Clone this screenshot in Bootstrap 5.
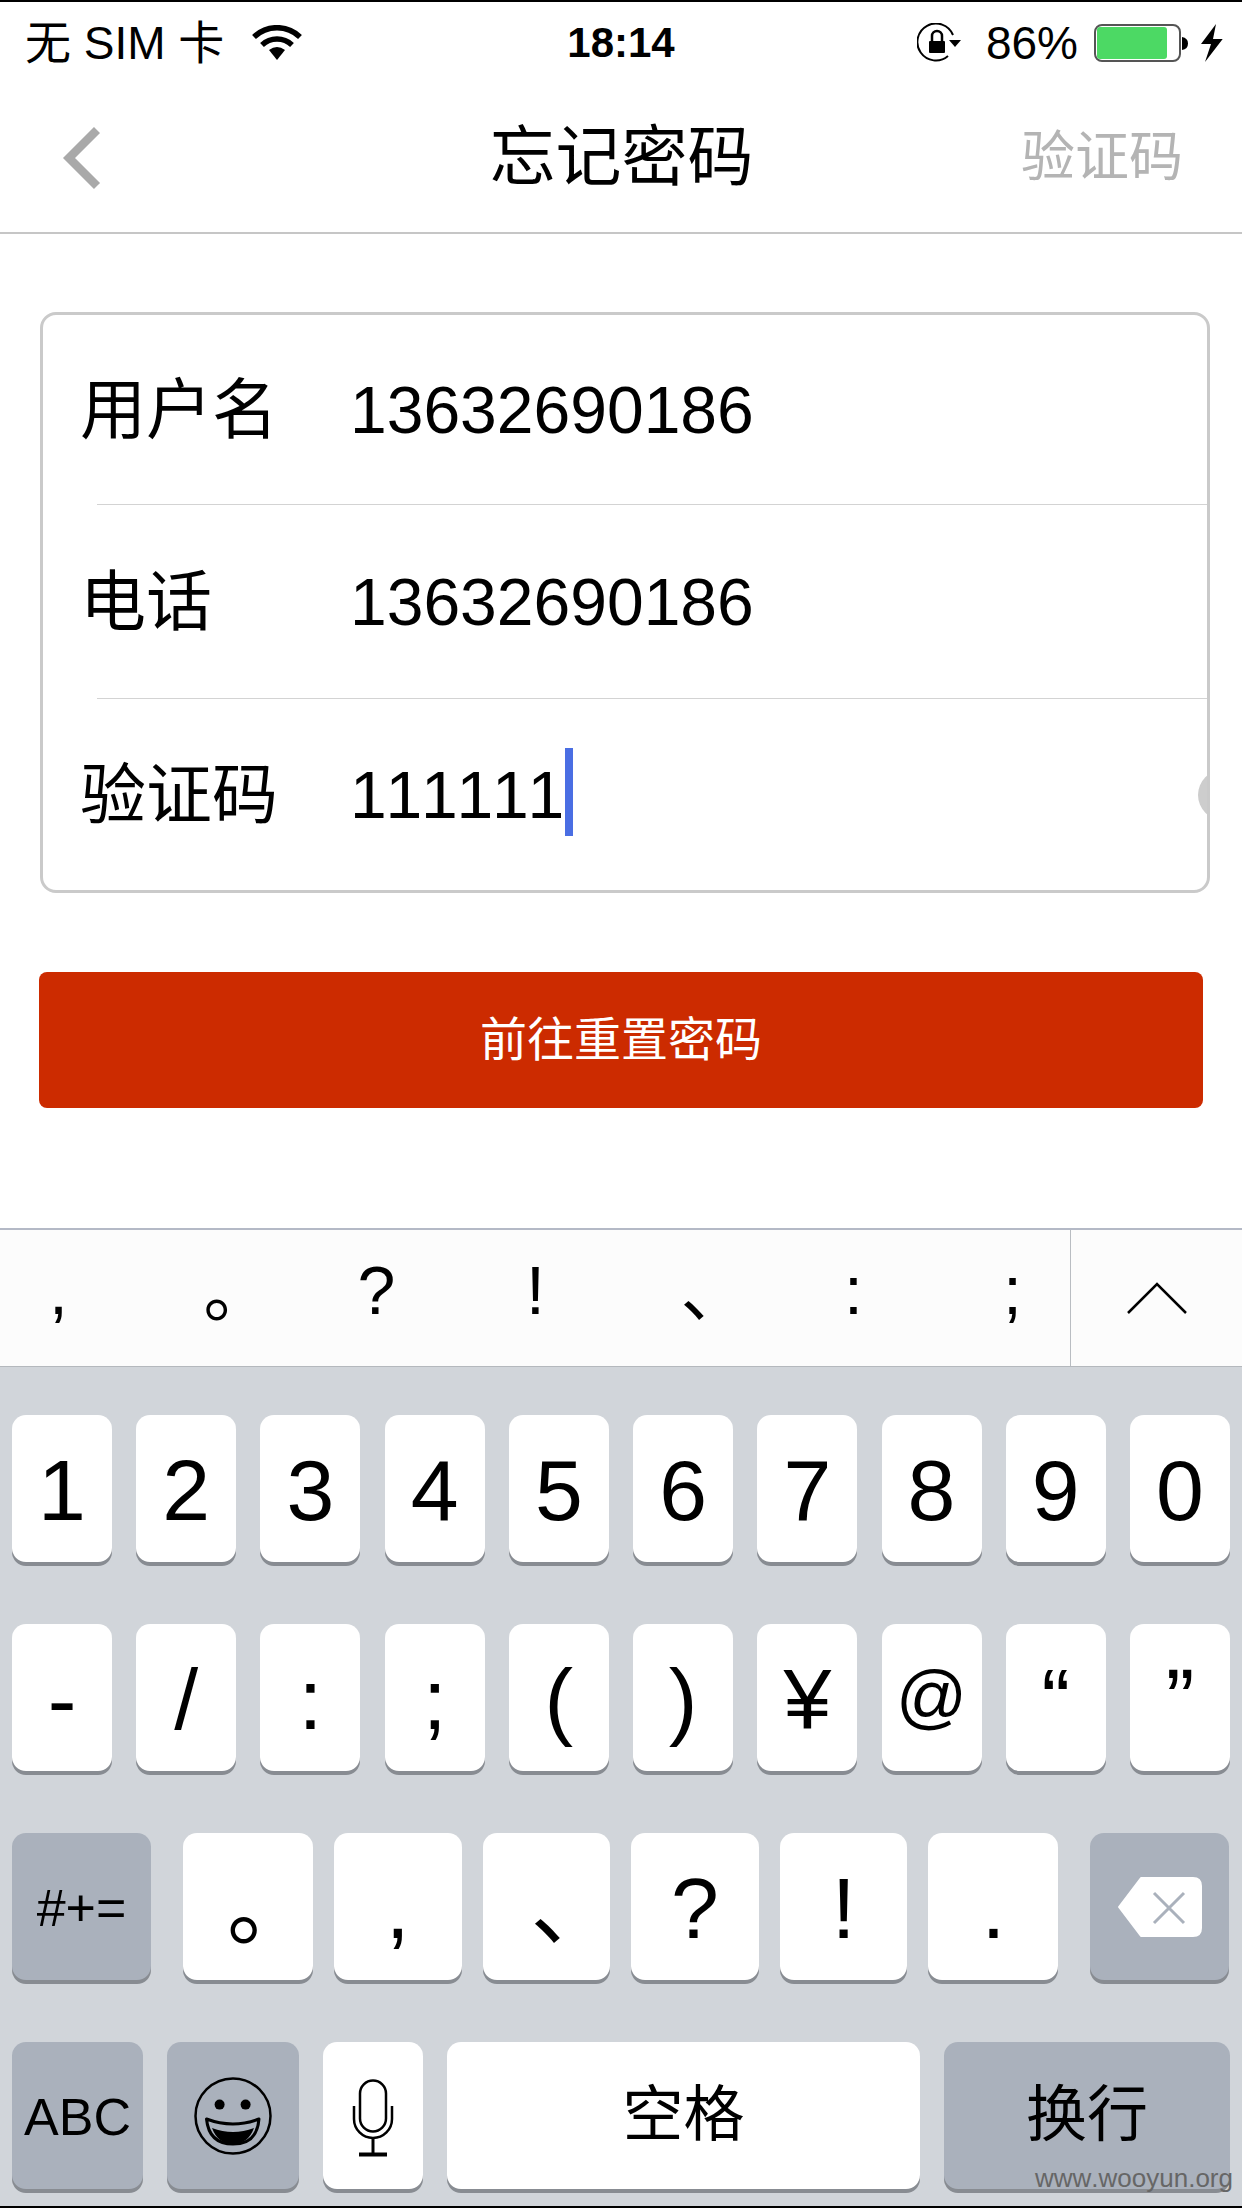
<!DOCTYPE html>
<html lang="zh">
<head>
    <meta charset="UTF-8">
    <title>忘记密码</title>
    <link href="https://cdn.jsdelivr.net/npm/bootstrap@5.3.0/dist/css/bootstrap.min.css" rel="stylesheet">
    <style>
        html, body { height: 2208px; overflow: hidden; }
        body { font-family: "Liberation Sans", "Noto Sans CJK SC", sans-serif; color: #000; background: #fff; font-kerning: none; }
        .phone { height: 2208px; border-top: 2px solid #000; border-bottom: 2px solid #000; }

        /* status bar */
        .status-bar { height: 82px; padding: 0 19px 0 25px; font-size: 46px; line-height: 58px; flex: none; }
        .status-left { width: 494px; }
        .status-right { width: 500px; }
        .status-time { font-weight: 700; font-size: 42px; }
        .sim-text { margin-right: 28px; white-space: nowrap; }
        .gap-lock { margin-right: 25px; }
        .gap-pct { margin-right: 16px; }
        .gap-bat { margin-right: 13px; }

        /* title bar */
        .title-bar { height: 150px; border-bottom: 2px solid #c6c6c6; padding: 0 59px 0 60px; flex: none; }
        .title-side { width: 130px; }
        .title-text { font-size: 66px; line-height: 1; margin-top: -2px; }
        .title-action { font-size: 54px; line-height: 1; color: #b4b4b4; white-space: nowrap; margin-top: -2px; }

        /* form */
        .form-box { margin: 78px 32px 0 40px; height: 581px; border: 3px solid #cacaca; border-radius: 16px; overflow: hidden; flex: none; }
        .form-line { height: 194px; padding-left: 37px; position: relative; }
        .form-line:first-child { height: 190px; }
        .form-line:last-child { height: 191px; }
        .form-line + .form-line::before { content: ""; position: absolute; top: -1px; left: 54px; right: 0; border-top: 1px solid #d3d3d3; }
        .form-label-text { width: 270px; font-size: 66px; line-height: 1; }
        .form-value { font-size: 66px; line-height: 1; }
        .code-value { letter-spacing: -1.2px; position: relative; }
        .caret-bar { position: absolute; left: 100%; top: -14px; width: 8px; height: 88px; margin-left: 2px; background: #4a6ee3; }
        .clear-dot { position: absolute; right: -41px; top: 71px; width: 50px; height: 50px; border-radius: 50%; background: #cdcdcd; }

        .go-btn { margin: 79px 39px 0 39px; height: 136px; width: 1164px; background: #cc2b00; border: 0; border-radius: 8px; color: #fff; font-size: 47px; flex: none; }
        .go-btn:hover { background: #cc2b00; color: #fff; }

        /* candidates */
        .cand-bar { height: 139px; background: #fcfcfc; border-top: 2px solid #b4b9c6; border-bottom: 1px solid #b4b8bd; flex: none; }
        .cand-list { width: 1070px; overflow: hidden; }
        .cand-item { width: 159px; height: 136px; flex: none; text-align: center; font-size: 68px; line-height: 120px; position: relative; left: -21px; }
        .cand-cjk { padding-left: 40px; line-height: 124px; }
        .cand-arrow { width: 172px; border-left: 1px solid #b9bdc2; }

        /* keyboard */
        .kb { background: #d1d5da; height: 839px; flex: none; padding: 48px 12px 0 12px; }
        .kb-row { height: 147px; margin-bottom: 62px; }
        .kb-key { height: 147px; border-radius: 14px; background: #fff; box-shadow: 0 4px 0 #888c92; text-align: center; font-size: 86px; line-height: 151px; flex: none; }
        .kb-row-num .kb-key { width: 100px; }
        .kb-dark { background: #aab1bc; }
        .kb-cjk-dot { padding-left: 44px; }
        .kb-cjk-mark { padding-left: 48px; }
        .kb-at { font-size: 70px; line-height: 145px; }
        .kb-small { font-size: 52px; }
        .kb-big { font-size: 61px; line-height: 147px; }
        .kb-gap-r { margin-right: 21px; }
        .w-shift { width: 139px; margin-right: 32px; }
        .w-a { width: 130px; }
        .w-b { width: 127.6px; }
        .w-del { width: 139px; margin-left: 32px; }
        .w-abc { width: 131px; }
        .w-emoji { width: 132px; }
        .w-mic { width: 100px; padding-top: 5px; }
        .w-space { width: 473px; }
        .w-return { width: 286px; }
        .kb-row-last { gap: 24px; }
        .watermark { position: absolute; right: 9px; bottom: 13px; font-size: 26px; line-height: 30px; color: #666; }
    </style>
</head>
<body>
<div class="phone d-flex flex-column position-relative">

    <!-- 状态栏 -->
    <div class="status-bar d-flex align-items-center justify-content-between">
        <div class="status-left d-flex align-items-center">
            <span class="sim-text">无 SIM 卡</span>
            <svg width="50" height="36" viewBox="0 0 50 36">
                <path d="M2 12 A33 33 0 0 1 48 12" fill="none" stroke="#000" stroke-width="5.5"/>
                <path d="M10 20 A22 22 0 0 1 40 20" fill="none" stroke="#000" stroke-width="5.5"/>
                <path d="M17 25 Q25 19 33 25 L25 35 Z" fill="#000"/>
            </svg>
        </div>
        <div class="status-time">18:14</div>
        <div class="status-right d-flex align-items-center justify-content-end">
            <svg width="44" height="40" viewBox="0 0 44 40" class="gap-lock">
                <path d="M31 33 A18.5 18.5 0 1 1 36 12" fill="none" stroke="#000" stroke-width="2"/>
                <path d="M32 17 L44 17 L38 24 Z" fill="#000"/>
                <rect x="12" y="18" width="16" height="12" rx="1" fill="#000"/>
                <path d="M15 18 V13 A5 5 0 0 1 25 13 V18" fill="none" stroke="#000" stroke-width="2.5"/>
            </svg>
            <span class="gap-pct">86%</span>
            <svg width="94" height="38" viewBox="0 0 94 38" class="gap-bat">
                <rect x="1" y="1" width="85" height="36" rx="7" fill="#fff" stroke="#555" stroke-width="2"/>
                <rect x="3" y="3" width="70" height="32" rx="3" fill="#4cd964"/>
                <path d="M88 13 Q94 14 94 19.5 Q94 25 88 26 Z" fill="#000"/>
            </svg>
            <svg width="22" height="38" viewBox="0 0 22 38">
                <path d="M15 0 L0 20 L10 20 L4 38 L21.7 15 L12 15 Z" fill="#000"/>
            </svg>
        </div>
    </div>

    <!-- 标题栏 -->
    <div class="title-bar d-flex align-items-center justify-content-between">
        <div class="title-side">
            <svg width="44" height="62" viewBox="0 0 44 62">
                <path d="M37 3 L9 31 L37 59" fill="none" stroke="#a9a9a9" stroke-width="8.5"/>
            </svg>
        </div>
        <div class="title-text">忘记密码</div>
        <div class="title-side title-action d-flex justify-content-end">验证码</div>
    </div>

    <!-- 表单 -->
    <div class="form-box">
        <div class="form-line d-flex align-items-center">
            <div class="form-label-text">用户名</div>
            <div class="form-value">13632690186</div>
        </div>
        <div class="form-line d-flex align-items-center">
            <div class="form-label-text">电话</div>
            <div class="form-value">13632690186</div>
        </div>
        <div class="form-line d-flex align-items-center">
            <div class="form-label-text">验证码</div>
            <div class="form-value code-value">111111<span class="caret-bar"></span></div>
            <div class="clear-dot"></div>
        </div>
    </div>

    <button type="button" class="btn go-btn">前往重置密码</button>

    <div class="flex-grow-1"></div>

    <!-- 候选栏 -->
    <div class="cand-bar d-flex">
        <div class="cand-list d-flex">
            <div class="cand-item">,</div>
            <div class="cand-item cand-cjk">。</div>
            <div class="cand-item">?</div>
            <div class="cand-item">!</div>
            <div class="cand-item cand-cjk">、</div>
            <div class="cand-item">:</div>
            <div class="cand-item">;</div>
        </div>
        <div class="cand-arrow d-flex align-items-center justify-content-center">
            <svg width="60" height="32" viewBox="0 0 60 32">
                <path d="M1 31 L30 2 L59 31" fill="none" stroke="#000" stroke-width="2.5"/>
            </svg>
        </div>
    </div>

    <!-- 键盘 -->
    <div class="kb">
        <div class="kb-row kb-row-num d-flex justify-content-between">
            <div class="kb-key">1</div>
            <div class="kb-key">2</div>
            <div class="kb-key">3</div>
            <div class="kb-key">4</div>
            <div class="kb-key">5</div>
            <div class="kb-key">6</div>
            <div class="kb-key">7</div>
            <div class="kb-key">8</div>
            <div class="kb-key">9</div>
            <div class="kb-key">0</div>
        </div>
        <div class="kb-row kb-row-num d-flex justify-content-between">
            <div class="kb-key">-</div>
            <div class="kb-key">/</div>
            <div class="kb-key">:</div>
            <div class="kb-key">;</div>
            <div class="kb-key">(</div>
            <div class="kb-key">)</div>
            <div class="kb-key">¥</div>
            <div class="kb-key kb-at">@</div>
            <div class="kb-key">“</div>
            <div class="kb-key">”</div>
        </div>
        <div class="kb-row d-flex">
            <div class="kb-key kb-dark kb-small w-shift">#+=</div>
            <div class="kb-key kb-gap-r w-a kb-cjk-dot">。</div>
            <div class="kb-key kb-gap-r w-b">,</div>
            <div class="kb-key kb-gap-r w-b kb-cjk-mark">、</div>
            <div class="kb-key kb-gap-r w-b">?</div>
            <div class="kb-key kb-gap-r w-b">!</div>
            <div class="kb-key w-a">.</div>
            <div class="kb-key kb-dark w-del d-flex align-items-center justify-content-center">
                <svg width="86" height="62" viewBox="0 0 86 62">
                    <path d="M24 2 H76 Q84 2 84 10 V52 Q84 60 76 60 H24 L2 31 Z" fill="#fff" stroke="#fff" stroke-width="2" stroke-linejoin="round"/>
                    <path d="M37 17 L67 47 M67 17 L37 47" stroke="#aab1bc" stroke-width="3" fill="none"/>
                </svg>
            </div>
        </div>
        <div class="kb-row kb-row-last d-flex">
            <div class="kb-key kb-dark kb-small w-abc">ABC</div>
            <div class="kb-key kb-dark w-emoji d-flex align-items-center justify-content-center">
                <svg width="78" height="78" viewBox="0 0 78 78">
                    <circle cx="39" cy="39" r="37.5" fill="none" stroke="#000" stroke-width="2.5"/>
                    <circle cx="25.6" cy="27.6" r="5" fill="#000"/>
                    <circle cx="51.6" cy="27.6" r="5" fill="#000"/>
                    <path d="M12.5 42 Q39 52 65 42 Q63 67 39 67 Q15 67 12.5 42 Z" fill="none" stroke="#000" stroke-width="3" stroke-linejoin="round"/>
                    <path d="M18 51 Q39 59 60 51 Q54 67 39 67 Q24 67 18 51 Z" fill="#000"/>
                </svg>
            </div>
            <div class="kb-key w-mic d-flex align-items-center justify-content-center">
                <svg width="44" height="78" viewBox="0 0 44 78">
                    <rect x="9" y="1.5" width="26" height="51" rx="13" fill="none" stroke="#000" stroke-width="2.5"/>
                    <path d="M3 27 V40 A19 19 0 0 0 41 40 V27" fill="none" stroke="#000" stroke-width="2.5"/>
                    <path d="M22 59 V75" stroke="#000" stroke-width="3"/>
                    <path d="M8 75.5 H36" stroke="#000" stroke-width="4"/>
                </svg>
            </div>
            <div class="kb-key kb-big w-space">空格</div>
            <div class="kb-key kb-dark kb-big w-return">换行</div>
        </div>
    </div>

    <div class="watermark">www.wooyun.org</div>
</div>

<script src="https://cdn.jsdelivr.net/npm/bootstrap@5.3.0/dist/js/bootstrap.bundle.min.js"></script>
</body>
</html>
